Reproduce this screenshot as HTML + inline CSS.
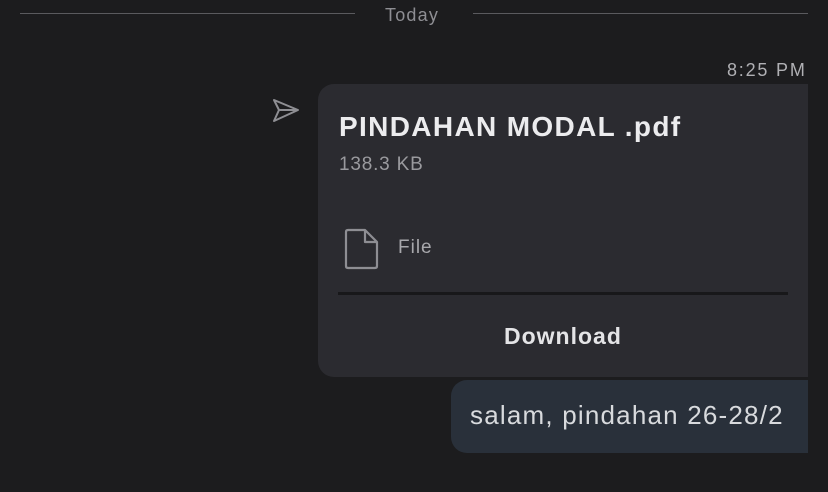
<html><head><style>
body{margin:0;width:828px;height:492px;background:#1c1c1e;font-family:"Liberation Sans",sans-serif;position:relative;overflow:hidden}
.a{position:absolute}
</style></head><body>
<div class="a" style="left:20px;top:13px;width:335px;height:1px;background:#5a5a5e"></div>
<div class="a" style="left:473px;top:13px;width:335px;height:1px;background:#5a5a5e"></div>
<div class="a" style="left:385px;top:5px;font-size:18px;color:#8e8e93;letter-spacing:1.2px">Today</div>
<div class="a" style="left:727px;top:60px;font-size:18px;color:#b0b0b4;letter-spacing:1.8px">8:25 PM</div>
<svg class="a" style="left:271px;top:97px" width="30" height="28" viewBox="0 0 30 28"><path d="M3 3 L27 13 L3 24 L8 13 Z M8 13 H27" fill="none" stroke="#8e8e93" stroke-width="2" stroke-linejoin="round"/></svg>
<div class="a" style="left:318px;top:84px;width:490px;height:293px;background:#2b2b30;border-radius:16px 0 0 16px"></div>
<div class="a" style="left:339px;top:111px;font-size:28px;font-weight:bold;color:#ececee;letter-spacing:1.35px">PINDAHAN MODAL .pdf</div>
<div class="a" style="left:339px;top:154px;font-size:19px;color:#9a9a9e;letter-spacing:0.8px">138.3 KB</div>
<svg class="a" style="left:344px;top:228px" width="36" height="42" viewBox="0 0 36 42"><path d="M4 2 H21 L33 14 V38 Q33 40 31 40 H4 Q2 40 2 38 V4 Q2 2 4 2 Z M21 2 V14 H33" fill="none" stroke="#8e8e93" stroke-width="2.2" stroke-linejoin="round"/></svg>
<div class="a" style="left:398px;top:237px;font-size:19px;color:#a8a8ac;letter-spacing:1px">File</div>
<div class="a" style="left:338px;top:292px;width:450px;height:3px;background:#18181a"></div>
<div class="a" style="left:504px;top:323px;font-size:23px;font-weight:bold;color:#e4e4e6;letter-spacing:1px">Download</div>
<div class="a" style="left:451px;top:380px;width:357px;height:73px;background:#29303a;border-radius:16px 0 0 16px"></div>
<div class="a" style="left:470px;top:400px;font-size:26px;color:#d8dadd;letter-spacing:1.2px">salam, pindahan 26-28/2</div>
</body></html>
